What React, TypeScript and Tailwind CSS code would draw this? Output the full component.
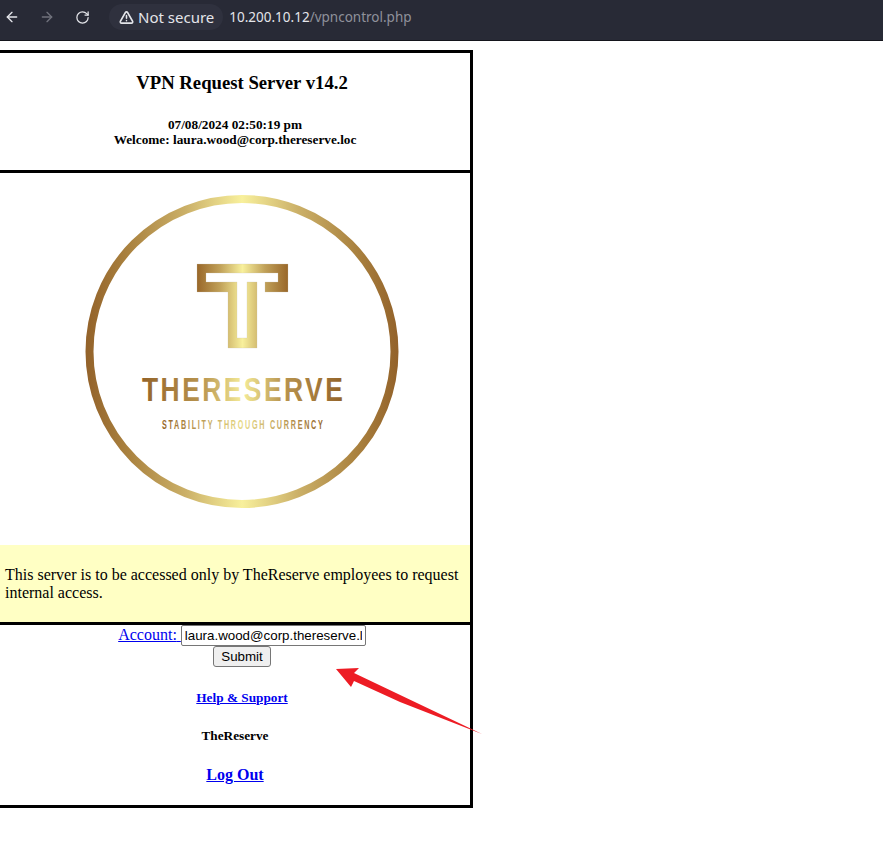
import React from 'react';
import { ArrowLeft, ArrowRight, RotateCw, TriangleAlert } from 'lucide-react';

const Logo = () => (
  <svg width="330" height="330" viewBox="0 0 330 330" className="block">
    <defs>
      <linearGradient id="ring" gradientUnits="userSpaceOnUse" x1="6" y1="0" x2="318" y2="0">
        <stop offset="0" stopColor="#93622a" />
        <stop offset="0.14" stopColor="#ab8340" />
        <stop offset="0.32" stopColor="#cbb068" />
        <stop offset="0.5" stopColor="#f8f09c" />
        <stop offset="0.68" stopColor="#cbb068" />
        <stop offset="0.86" stopColor="#ab8340" />
        <stop offset="1" stopColor="#93622a" />
      </linearGradient>
      <linearGradient id="tee" gradientUnits="userSpaceOnUse" x1="117" y1="0" x2="208" y2="0">
        <stop offset="0" stopColor="#996729" />
        <stop offset="0.25" stopColor="#c0a058" />
        <stop offset="0.5" stopColor="#f8f09c" />
        <stop offset="0.75" stopColor="#c0a058" />
        <stop offset="1" stopColor="#996729" />
      </linearGradient>
      <linearGradient id="word" gradientUnits="userSpaceOnUse" x1="0" y1="0" x2="251" y2="0">
        <stop offset="0" stopColor="#94642a" />
        <stop offset="0.3" stopColor="#b9954f" />
        <stop offset="0.5" stopColor="#f5ec98" />
        <stop offset="0.7" stopColor="#b9954f" />
        <stop offset="1" stopColor="#94642a" />
      </linearGradient>
      <linearGradient id="tag" gradientUnits="userSpaceOnUse" x1="0" y1="0" x2="268" y2="0">
        <stop offset="0" stopColor="#94642a" />
        <stop offset="0.5" stopColor="#e8da88" />
        <stop offset="1" stopColor="#94642a" />
      </linearGradient>
    </defs>
    <circle cx="162" cy="158.5" r="152.5" fill="none" stroke="url(#ring)" strokeWidth="8" />
    <path
      fill="url(#tee)"
      stroke="#c9c5b4"
      strokeOpacity="0.5"
      strokeWidth="0.5"
      d="M117 71H208V99H185V89H198V80H126V89H157V145H167V89H177V155H148V99H117Z"
    />
    <text
      transform="translate(62 208) scale(0.8 1)"
      x="0"
      y="0"
      textLength="251"
      lengthAdjust="spacing"
      fill="url(#word)"
      className="font-['Liberation_Sans',sans-serif] font-bold text-[33px]"
    >
      THERESERVE
    </text>
    <text
      transform="translate(82 236) scale(0.6 1)"
      x="0"
      y="0"
      textLength="268"
      lengthAdjust="spacing"
      fill="url(#tag)"
      className="font-['Liberation_Sans',sans-serif] font-bold text-[12px]"
    >
      STABILITY THROUGH CURRENCY
    </text>
  </svg>
);

const App: React.FC = () => {
  return (
    <div className="relative min-h-[855px] bg-white font-['Liberation_Serif',serif] text-black overflow-hidden">
      {/* Browser bar */}
      <div className="h-[41px] bg-[#282a36] border-b border-[#14151c] flex items-center pl-[4px] pb-[6px] font-['Noto_Sans',sans-serif]">
        <ArrowLeft size={16} strokeWidth={2} className="text-[#e4e5ea]" />
        <ArrowRight size={16} strokeWidth={2} className="text-[#70727c] ml-[19px]" />
        <RotateCw size={15} strokeWidth={2} className="text-[#e4e5ea] ml-[20px]" />
        <div className="ml-[19px] h-[26px] pl-[10px] pr-[9px] rounded-full bg-[#2f313e] flex items-center gap-[4px]">
          <TriangleAlert size={15} strokeWidth={2.5} className="text-[#e4e5ea]" />
          <span className="text-[15px] text-[#e4e5ea]">Not secure</span>
        </div>
        <span className="ml-[6px] text-[13.5px] text-[#e4e5ea]">
          10.200.10.12<span className="text-[#8f919b]">/vpncontrol.php</span>
        </span>
      </div>

      {/* Panel */}
      <div className="mt-[9px] ml-[-3px] w-[476px] border-[3px] border-black">
        <div className="h-[117px] border-b-[3px] box-content border-black text-center">
          <div className="pl-[14px] pt-[19px] text-[18.72px] leading-[22px] font-bold">VPN Request Server v14.2</div>
          <div className="mt-[23px] text-[13.28px] leading-[15px] font-bold">
            07/08/2024 02:50:19 pm
            <br />
            Welcome: laura.wood@corp.thereserve.loc
          </div>
        </div>

        <div className="h-[372px] pl-[80px] pt-[20px]">
          <Logo />
        </div>

        <div className="h-[77px] bg-[#ffffc4] px-[5px] pt-[21px] text-[16px] leading-[18px]">
          This server is to be accessed only by TheReserve employees to request internal access.
        </div>

        <div className="border-t-[3px] border-black h-[183px] text-center">
          <div className="pl-[14px] h-[21px] flex justify-center items-start">
            <a href="#" className="text-[#0000ee] underline text-[16px] leading-[18px] mt-[1px] whitespace-pre">
              Account:{' '}
            </a>
            <input
              readOnly
              value="laura.wood@corp.thereserve.loc"
              className="w-[185px] h-[21px] border border-[#767676] rounded-[2px] px-[3px] font-['Liberation_Sans',sans-serif] text-[13.33px] outline-none"
            />
          </div>
          <div className="pl-[14px] flex justify-center">
            <button className="w-[58px] h-[21px] bg-[#efefef] border border-[#767676] rounded-[3px] font-['Liberation_Sans',sans-serif] text-[13.33px] text-black">
              Submit
            </button>
          </div>
          <div className="pl-[14px] mt-[23px] text-[13.28px] leading-[15px] font-bold">
            <a href="#" className="text-[#0000ee] underline">
              Help &amp; Support
            </a>
          </div>
          <div className="mt-[23px] text-[13.28px] leading-[15px] font-bold">TheReserve</div>
          <div className="mt-[23px] text-[16px] leading-[18px] font-bold">
            <a href="#" className="text-[#0000ee] underline">
              Log Out
            </a>
          </div>
        </div>
      </div>

      {/* Red annotation arrow */}
      <svg className="absolute left-[330px] top-[660px]" width="160" height="80" viewBox="0 0 160 80">
        <path d="M6 9L29 8L24 13L152 74L70 42L24 21L21 27Z" fill="#ed1c24" />
      </svg>
    </div>
  );
};

export default App;
